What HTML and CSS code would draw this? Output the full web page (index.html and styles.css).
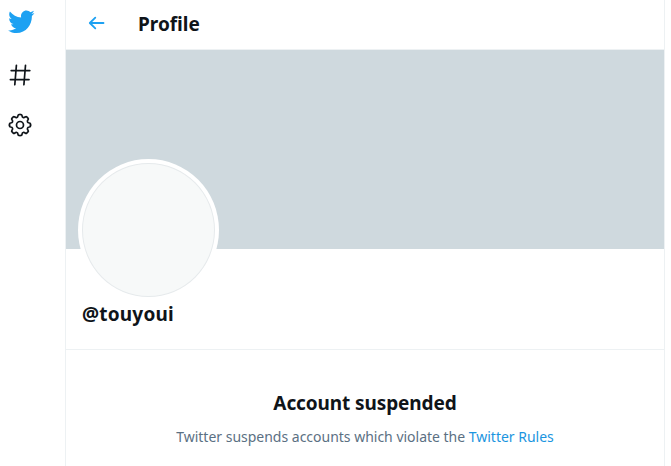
FILE: index.html
```html
<!DOCTYPE html>
<html lang="en">
<head>
<meta charset="utf-8">
<title>Profile</title>
<link rel="stylesheet" href="styles.css">
</head>
<body>
<div class="app">
  <nav class="sidebar">
    <a class="logo"><svg width="28" height="29.5" viewBox="0 0 24 24" preserveAspectRatio="none"><path fill="#1da1f2" d="M23.643 4.937c-.835.37-1.732.62-2.675.733.962-.576 1.7-1.49 2.048-2.578-.9.534-1.897.922-2.958 1.13-.85-.904-2.06-1.47-3.4-1.47-2.572 0-4.658 2.086-4.658 4.66 0 .364.042.718.12 1.06-3.873-.195-7.304-2.05-9.602-4.868-.4.69-.63 1.49-.63 2.342 0 1.616.823 3.043 2.072 3.878-.764-.025-1.482-.234-2.11-.583v.06c0 2.257 1.605 4.14 3.737 4.568-.392.106-.803.162-1.227.162-.3 0-.593-.028-.877-.082.593 1.85 2.313 3.198 4.352 3.234-1.595 1.25-3.604 1.995-5.786 1.995-.376 0-.747-.022-1.112-.065 2.062 1.323 4.51 2.093 7.14 2.093 8.57 0 13.255-7.098 13.255-13.254 0-.2-.005-.402-.014-.602.91-.658 1.7-1.477 2.323-2.41z"/></svg></a>
    <a class="item"><svg class="line" width="26" height="26" viewBox="-13 -13 26 26"><path d="M-3.6-9.7L-5.2 9.7M5.5-9.7L3.9 9.7M-8.8-4.4H9.8M-9.6 4.6H9"/></svg></a>
    <a class="item"><svg class="line" width="26" height="26" viewBox="-13 -13 26 26">
      <defs><path id="q" d="M0-10.5H1Q1.8-10.5 2-9.3Q2.2-7.8 3.1-7.5Q3.96-7.1 5.16-7.99Q6.15-8.7 6.72-8.13L8.13-6.72Q8.7-6.15 7.99-5.16Q7.1-3.96 7.5-3.1Q7.8-2.2 9.3-2Q10.5-1.8 10.5-1V0"/></defs>
      <use href="#q"/><use href="#q" transform="rotate(90)"/><use href="#q" transform="rotate(180)"/><use href="#q" transform="rotate(270)"/>
      <circle r="3.5"/></svg></a>
  </nav>
  <main class="column">
    <header class="topbar">
      <svg class="back" width="18" height="16" viewBox="0 0 18 16"><path d="M15.5 8H2M7.3 2.6L1.8 8L7.3 13.4"/></svg>
      <h1 class="title">Profile</h1>
    </header>
    <div class="banner"></div>
    <section class="profile">
      <div class="avatar"><div class="face"></div></div>
      <h2 class="handle">@touyoui</h2>
    </section>
    <section class="notice">
      <h2 class="headline">Account suspended</h2>
      <p class="detail">Twitter suspends accounts which violate the <a class="link">Twitter Rules</a></p>
    </section>
  </main>
</div>
</body>
</html>
```
FILE: styles.css
```css
* { box-sizing: border-box; }
body { margin: 0; background: #fff; color: #0f1419; font-family: "Noto Sans", "Open Sans", sans-serif; }
h1, h2, p { margin: 0; white-space: nowrap; }
svg { display: block; flex: none; }
.app { display: flex; height: 466px; overflow: hidden; }
.sidebar { width: 65px; padding: 7px 0 0 7px; }
.logo { display: block; height: 43px; }
.item { display: block; height: 50px; padding-top: 12px; }
.line { fill: none; stroke: #0f1419; stroke-width: 1.7; stroke-linecap: round; stroke-linejoin: round; }
.column { width: 600px; border: solid #edf1f3; border-width: 0 1px; }
.topbar { display: flex; align-items: center; height: 50px; padding: 0 0 2px 22px; border-bottom: 1px solid #edf1f3; }
.back { fill: none; stroke: #1da1f2; stroke-width: 1.8; stroke-linecap: round; stroke-linejoin: round; margin-top: -1px; }
.title { margin-left: 32px; font-size: 19px; line-height: 24px; letter-spacing: 0; }
.banner { height: 199px; background: #cfd9de; }
.profile { display: flex; flex-direction: column; height: 101px; padding-left: 12px; border-bottom: 1px solid #edf1f3; }
.avatar { flex: none; width: 141px; height: 142px; margin-top: -90px; padding: 4px; border-radius: 50%; background: #fff; }
.face { height: 134px; border: 1px solid #e6eaec; border-radius: 50%; background: #f7f9f9; }
.handle { margin: 1px 0 0 4px; font-size: 19px; line-height: 24px; letter-spacing: .2px; }
.notice { padding-top: 41px; text-align: center; }
.headline { font-size: 19px; line-height: 24px; letter-spacing: -.1px; }
.detail { margin-top: 12px; font-size: 14px; line-height: 20px; letter-spacing: -.01px; color: #5b7083; }
.link { color: #1b95e0; }
```
